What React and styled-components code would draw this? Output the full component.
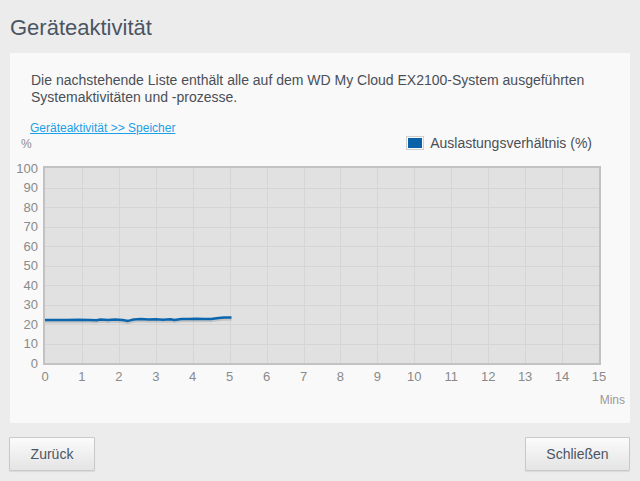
import React from "react";
import styled, { createGlobalStyle } from "styled-components";

const Global = createGlobalStyle`
  html, body { margin: 0; padding: 0; background: #ececec; }
  body { font-family: "Liberation Sans", Arial, sans-serif; }
`;

const Page = styled.div`
  width: 640px;
  height: 481px;
  box-sizing: border-box;
  padding: 0 10px;
  display: flex;
  flex-direction: column;
`;

const Title = styled.h1`
  margin: 0;
  height: 53px;
  box-sizing: border-box;
  padding-top: 14px;
  font-size: 22px;
  line-height: 28px;
  font-weight: normal;
  color: #4b5563;
`;

const Panel = styled.div`
  height: 370px;
  background: #f9f9f9;
  box-sizing: border-box;
  padding-top: 19px;
  display: flex;
  flex-direction: column;
`;

const Desc = styled.p`
  margin: 0 0 0 21px;
  font-size: 14px;
  line-height: 17px;
  color: #4a4f57;
`;

const Link = styled.a`
  margin: 15px 0 0 20px;
  font-size: 12px;
  line-height: 14px;
  color: #1ca0e6;
  text-decoration: underline;
  align-self: flex-start;
  cursor: pointer;
`;

const ChartHead = styled.div`
  display: flex;
  justify-content: space-between;
  align-items: flex-end;
  margin-top: -2px;
  padding: 0 38px 0 11px;
  height: 18px;
`;

const AxisUnit = styled.span`
  font-size: 12px;
  color: #8c8c8c;
  line-height: 14px;
`;

const Legend = styled.div`
  display: flex;
  align-items: center;
  gap: 6px;
  font-size: 14px;
  color: #4a4f57;
  line-height: 16px;
`;

const Swatch = styled.span`
  width: 14px;
  height: 10px;
  border: 1px solid #cfcfcf;
  padding: 1px;
  background: #0b62a8;
  background-clip: content-box;
`;

const ChartSvg = styled.svg`
  display: block;
  margin-top: 3px;
`;

const Mins = styled.div`
  align-self: flex-end;
  margin-right: 5px;
  margin-top: 9px;
  font-size: 12px;
  color: #9a9a9a;
  line-height: 14px;
`;

const Footer = styled.div`
  display: flex;
  justify-content: space-between;
  padding-top: 14px;
  margin-left: -1px;
`;

const Button = styled.button`
  height: 34px;
  width: ${(p) => p.$w}px;
  border: 1px solid #c9c9c9;
  border-radius: 1px;
  background: linear-gradient(#fbfbfb, #e4e4e4);
  box-shadow: 0 1px 1px rgba(0,0,0,0.08);
  font-family: "Liberation Sans", Arial, sans-serif;
  font-size: 14px;
  color: #4b5563;
  cursor: pointer;
`;

const data = [
  [0, 22], [0.3, 22], [0.6, 22.1], [0.9, 22.2], [1.2, 22], [1.4, 21.9],
  [1.5, 22.3], [1.7, 22.1], [1.9, 22.3], [2.1, 22.1], [2.25, 21.6],
  [2.4, 22.3], [2.6, 22.6], [2.8, 22.3], [3.0, 22.4], [3.2, 22.2],
  [3.4, 22.4], [3.5, 22.1], [3.7, 22.6], [3.9, 22.5], [4.1, 22.7],
  [4.3, 22.5], [4.5, 22.6], [4.7, 23.1], [4.85, 23.4], [5.05, 23.3],
];

const PX0 = 35, PX1 = 589, PY0 = 14, PY1 = 209;
const sx = (m) => PX0 + (m / 15) * (PX1 - PX0);
const sy = (v) => PY1 - (v / 100) * (PY1 - PY0);

function Chart() {
  const pts = data.map(([m, v]) => `${sx(m).toFixed(1)},${sy(v).toFixed(1)}`).join(" ");
  const shadow = data.map(([m, v]) => `${sx(m).toFixed(1)},${(sy(v) + 2).toFixed(1)}`).join(" ");
  const yt = [0, 10, 20, 30, 40, 50, 60, 70, 80, 90, 100];
  const xt = Array.from({ length: 16 }, (_, i) => i);
  return (
    <ChartSvg width="620" height="230" viewBox="0 0 620 230">
      <rect x={PX0 - 1} y={PY0 - 1} width={PX1 - PX0 + 2} height={PY1 - PY0 + 2} fill="#e1e1e1" />
      {yt.slice(1, -1).map((v) => (
        <line key={"h" + v} x1={PX0} x2={PX1} y1={Math.round(sy(v)) + 0.5} y2={Math.round(sy(v)) + 0.5} stroke="#d5d5d5" strokeWidth="1" />
      ))}
      {xt.slice(1, -1).map((m) => (
        <line key={"v" + m} x1={Math.round(sx(m)) + 0.5} x2={Math.round(sx(m)) + 0.5} y1={PY0} y2={PY1} stroke="#d5d5d5" strokeWidth="1" />
      ))}
      <rect x={PX0 - 1} y={PY0 - 1} width={PX1 - PX0 + 2} height={PY1 - PY0 + 2} fill="none" stroke="#c2c2c2" strokeWidth="2" />
      <polyline points={shadow} fill="none" stroke="rgba(0,0,0,0.12)" strokeWidth="2.5" strokeLinejoin="round" />
      <polyline points={pts} fill="none" stroke="#0b66ae" strokeWidth="2.5" strokeLinejoin="round" />
      {yt.map((v) => (
        <text key={"yl" + v} x="28" y={sy(v) + 4.5} textAnchor="end" fontSize="13" fill="#8a8a8a" fontFamily="Liberation Sans, Arial, sans-serif">{v}</text>
      ))}
      {xt.map((m) => (
        <text key={"xl" + m} x={sx(m)} y="227" textAnchor="middle" fontSize="13" fill="#8a8a8a" fontFamily="Liberation Sans, Arial, sans-serif">{m}</text>
      ))}
    </ChartSvg>
  );
}

export default function App() {
  return (
    <Page>
      <Global />
      <Title>Geräteaktivität</Title>
      <Panel>
        <Desc>
          Die nachstehende Liste enthält alle auf dem WD My Cloud EX2100-System ausgeführten
          <br />
          Systemaktivitäten und -prozesse.
        </Desc>
        <Link>Geräteaktivität &gt;&gt; Speicher</Link>
        <ChartHead>
          <AxisUnit>%</AxisUnit>
          <Legend>
            <Swatch />
            Auslastungsverhältnis (%)
          </Legend>
        </ChartHead>
        <Chart />
        <Mins>Mins</Mins>
      </Panel>
      <Footer>
        <Button $w={86}>Zurück</Button>
        <Button $w={105}>Schließen</Button>
      </Footer>
    </Page>
  );
}
